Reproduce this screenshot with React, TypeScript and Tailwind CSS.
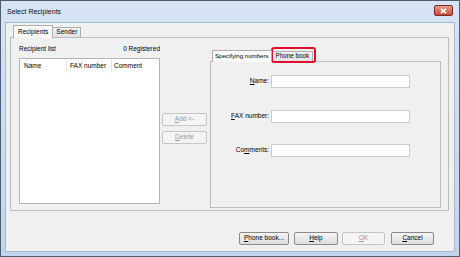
import React from "react";

const font = "font-['Segoe_UI','Liberation_Sans',Arial,sans-serif]";

const U = ({ children }: { children: React.ReactNode }) => (
  <span className="underline underline-offset-[1px]">{children}</span>
);

const WinButton = ({
  children,
  width,
  disabled,
}: {
  children: React.ReactNode;
  width: string;
  disabled?: boolean;
}) => (
  <div
    className={`${width} flex h-[13px] items-center justify-center rounded-[2px] border text-[6.5px] leading-none ${
      disabled
        ? "border-[#c3c5c7] bg-[#f4f4f4] text-[#9a9a9a]"
        : "border-[#8a8a8a] bg-gradient-to-b from-[#f4f4f4] to-[#dedede] text-black"
    }`}
  >
    {children}
  </div>
);

const Field = ({ label, mt }: { label: React.ReactNode; mt: string }) => (
  <div className={`${mt} flex items-center`}>
    <div className="w-[60px] pr-[2px] text-right text-[6.5px] leading-none">{label}</div>
    <div className="h-[13px] w-[139px] border border-[#c9ccd0] bg-white" />
  </div>
);

const App = () => {
  return (
    <div
      className={`${font} flex h-[257px] w-[460px] flex-col border border-[#4f5d6d] bg-gradient-to-b from-[#d6e4f4] to-[#c1d6ee] text-black`}
    >
      {/* title bar */}
      <div className="flex h-[21px] shrink-0 items-center justify-between pl-[6px] pr-[6px]">
        <span className="text-[7px] leading-none text-[#111]">Select Recipients</span>
        <div className="mb-[2px] flex h-[11px] w-[19px] items-center justify-center rounded-[2px] border border-[#7a2a22] bg-gradient-to-b from-[#e6a08f] to-[#c34a33]">
          <svg width="7" height="6" viewBox="0 0 7 6">
            <path d="M1 0.8 L6 5.2 M6 0.8 L1 5.2" stroke="#fff" strokeWidth="1.6" />
          </svg>
        </div>
      </div>

      {/* client area */}
      <div className="mx-[4px] mb-[4px] flex flex-1 flex-col border border-[#a6bbd3] bg-[#f0f0f0] pl-[4px] pr-[5px] pt-[1px]">
        {/* tabs */}
        <div className="flex h-[13px] items-end pl-[3px]">
          <div className="-mb-px z-10 flex h-[13px] items-center border border-b-0 border-[#adadad] bg-[#fafafa] px-[4px] text-[6.5px] leading-none">
            Recipients
          </div>
          <div className="flex h-[10px] items-center border border-l-0 border-b-0 border-[#adadad] bg-gradient-to-b from-[#f2f2f2] to-[#e3e3e3] px-[3px] text-[6.5px] leading-none">
            Sender
          </div>
        </div>

        {/* tab panel */}
        <div className="flex h-[174px] border border-[#bcbcbc] pl-[8px] pr-[5px] pt-[7px]">
          {/* recipient list */}
          <div className="flex w-[141px] flex-col">
            <div className="flex h-[9px] items-center justify-between text-[6.5px] leading-none">
              <span>Recipient list</span>
              <span>0 Registered</span>
            </div>
            <div className="mt-[4px] flex h-[146px] flex-col border border-[#b4b4b4] bg-white">
              <div className="flex h-[14px] items-center text-[6.5px] leading-none">
                <div className="flex h-full w-[47px] items-center border-r border-[#e5e5e5] pl-[4px]">Name</div>
                <div className="flex h-full w-[45px] items-center border-r border-[#e5e5e5] pl-[3px]">FAX number</div>
                <div className="flex h-full items-center pl-[2px]">Comment</div>
              </div>
            </div>
          </div>

          {/* add / delete */}
          <div className="ml-[2px] flex w-[45px] flex-col pt-[68px]">
            <WinButton width="w-[45px]" disabled>
              <span>
                <U>A</U>dd &lt;-
              </span>
            </WinButton>
            <div className="mt-[5px]">
              <WinButton width="w-[45px]" disabled>
                <span>
                  <U>D</U>elete
                </span>
              </WinButton>
            </div>
          </div>

          {/* right tab control */}
          <div className="ml-[3px] flex w-[231px] flex-col pt-[4px]">
            <div className="flex h-[12px] items-end pl-[2px]">
              <div className="-mb-px z-10 flex h-[12px] items-center border border-b-0 border-[#adadad] bg-[#fafafa] px-[2px] text-[6.1px] leading-none">
                Specifying numbers
              </div>
              <div className="relative flex h-[10px] items-center border border-l-0 border-b-0 border-[#adadad] bg-gradient-to-b from-[#f2f2f2] to-[#e3e3e3] pl-[4px] pr-[3px] text-[6.3px] leading-none">
                Phone book
                <div className="absolute -bottom-[2px] -left-[1px] -right-[4px] -top-[5px] rounded-[3px] border-2 border-[#e0102a]" />
              </div>
            </div>
            <div className="flex h-[147px] flex-col border border-[#bcbcbc] pt-[13px]">
              <Field
                mt="mt-0"
                label={
                  <>
                    <U>N</U>ame:
                  </>
                }
              />
              <Field
                mt="mt-[22px]"
                label={
                  <>
                    <U>F</U>AX number:
                  </>
                }
              />
              <Field
                mt="mt-[21px]"
                label={
                  <>
                    Co<U>m</U>ments:
                  </>
                }
              />
            </div>
          </div>
        </div>

        {/* bottom buttons */}
        <div className="mt-[21px] flex justify-end pr-[15px]">
          <WinButton width="w-[50px]">
            <span>
              <U>P</U>hone book...
            </span>
          </WinButton>
          <div className="ml-[5px]">
            <WinButton width="w-[44px]">
              <span>
                <U>H</U>elp
              </span>
            </WinButton>
          </div>
          <div className="ml-[4px]">
            <WinButton width="w-[43px]" disabled>
              <span>
                <U>O</U>K
              </span>
            </WinButton>
          </div>
          <div className="ml-[6px]">
            <WinButton width="w-[43px]">
              <span>
                <U>C</U>ancel
              </span>
            </WinButton>
          </div>
        </div>
      </div>
    </div>
  );
};

export default App;
